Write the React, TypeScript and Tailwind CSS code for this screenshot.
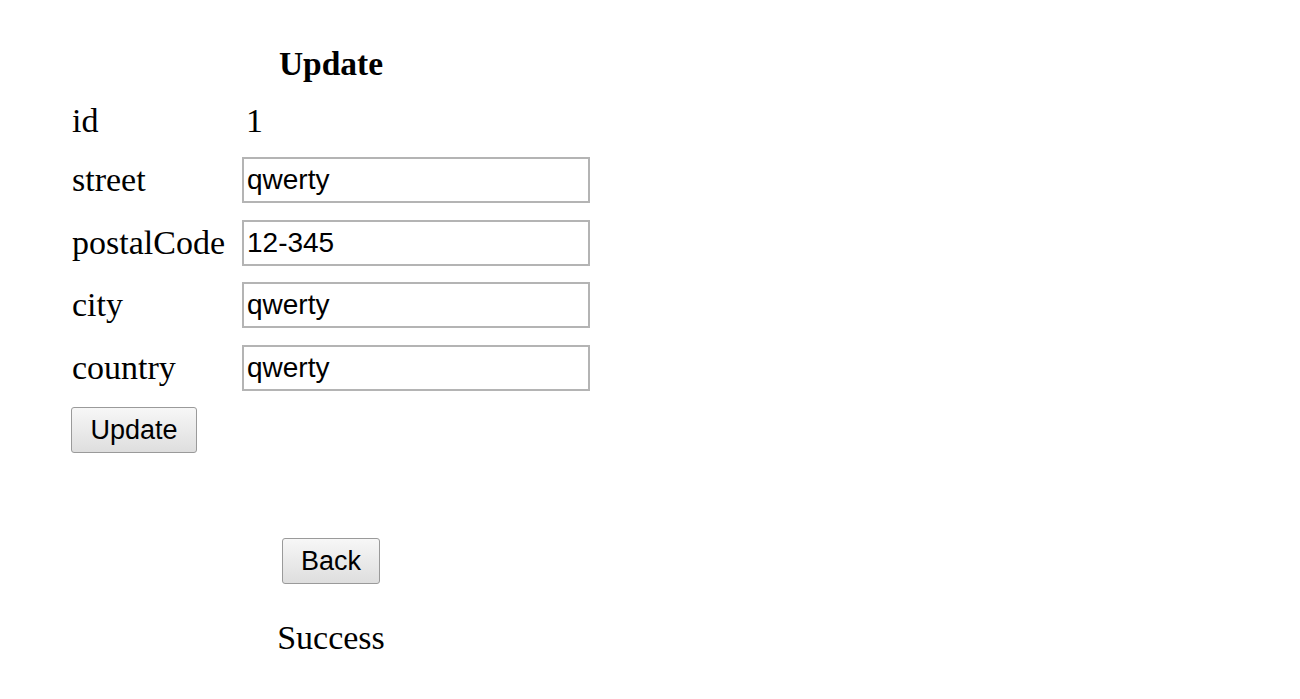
import React from "react";

const serif = "font-['Liberation_Serif','Times_New_Roman',serif]";
const sans = "font-['Liberation_Sans',Arial,sans-serif]";

function Row({ label, value, top }: { label: string; value: string; top: string }) {
  return (
    <div className={`flex items-center h-[46px] ${top}`}>
      <div className={`w-[176px] pl-[6px] text-[34px] leading-none text-black ${serif}`}>{label}</div>
      <input
        readOnly
        value={value}
        className={`w-[348px] h-[46px] border-2 border-[#b4b4b4] bg-white px-[3px] text-[28px] text-black outline-none ${sans}`}
      />
    </div>
  );
}

export default function App() {
  return (
    <div className="min-h-[699px] w-[1300px] bg-white pl-[66px] pt-[41px]">
      <div className="w-[530px] flex flex-col">
        <div className={`h-[46px] flex items-center justify-center text-[33.5px] leading-none font-bold text-black ${serif}`}>
          Update
        </div>
        <div className={`mt-[11px] h-[46px] flex items-center text-[34px] leading-none text-black ${serif}`}>
          <div className="w-[176px] pl-[6px]">id</div>
          <div className="pl-[4px]">1</div>
        </div>
        <Row label="street" value="qwerty" top="mt-[13px]" />
        <Row label="postalCode" value="12-345" top="mt-[17px]" />
        <Row label="city" value="qwerty" top="mt-[16px]" />
        <Row label="country" value="qwerty" top="mt-[17px]" />
        <div className="mt-[16px] pl-[5px]">
          <button
            className={`w-[126px] h-[46px] border border-[#9a9a9a] rounded-[3px] bg-gradient-to-b from-[#f7f7f7] to-[#dedede] text-[27px] leading-none text-black ${sans}`}
          >
            Update
          </button>
        </div>
        <div className="mt-[85px] flex justify-center">
          <button
            className={`w-[98px] h-[46px] border border-[#9a9a9a] rounded-[3px] bg-gradient-to-b from-[#f7f7f7] to-[#dedede] text-[27px] leading-none text-black ${sans}`}
          >
            Back
          </button>
        </div>
        <div className={`mt-[31px] h-[46px] flex items-center justify-center text-[34px] leading-none text-black ${serif}`}>
          Success
        </div>
      </div>
    </div>
  );
}
